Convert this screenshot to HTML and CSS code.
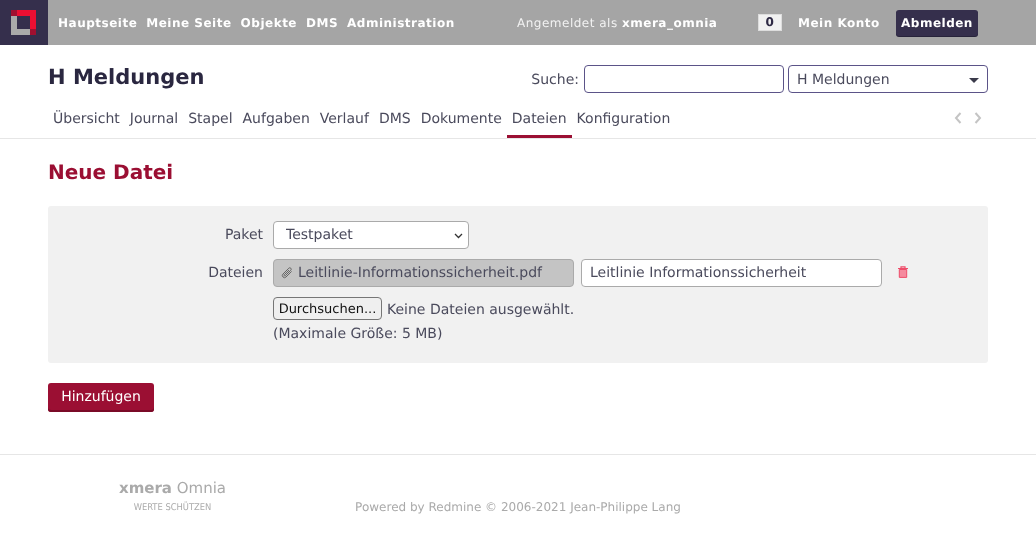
FILE: index.html
```html
<!DOCTYPE html>
<html lang="de">
<head>
<meta charset="utf-8">
<title>Neue Datei</title>
<link rel="stylesheet" href="styles.css">
</head>
<body>
<header class="top-menu">
  <a class="logo" href="#" aria-label="Startseite">
    <svg width="25" height="25" viewBox="0 0 25 25">
      <rect x="0" y="0" width="25" height="25" fill="#eb0f32"/>
      <path d="M0 6h6v13h19v6H0z" fill="#aaaaaa"/>
      <path d="M0 0h6v6H0z" fill="#a01030"/>
      <path d="M19 19h6v6h-6z" fill="#a01030"/>
      <rect x="6" y="6" width="13" height="13" fill="#352f4c"/>
    </svg>
  </a>
  <nav class="main-links">
    <a href="#">Hauptseite</a>
    <a href="#">Meine Seite</a>
    <a href="#">Objekte</a>
    <a href="#">DMS</a>
    <a href="#">Administration</a>
  </nav>
  <div class="logged-as">Angemeldet als <b>xmera_omnia</b></div>
  <span class="badge">0</span>
  <a class="account" href="#">Mein Konto</a>
  <a class="logout" href="#">Abmelden</a>
</header>

<div class="project-header">
  <h1 class="project-title">H Meldungen</h1>
  <form class="quick-search">
    <label class="search-label" for="q">Suche:</label>
    <input class="search-input" id="q" type="text">
    <div class="jump-box">H Meldungen<span class="jump-caret"></span></div>
  </form>
</div>

<nav class="tabs">
  <a href="#">Übersicht</a>
  <a href="#">Journal</a>
  <a href="#">Stapel</a>
  <a href="#">Aufgaben</a>
  <a href="#">Verlauf</a>
  <a href="#">DMS</a>
  <a href="#">Dokumente</a>
  <a class="selected" href="#">Dateien</a>
  <a href="#">Konfiguration</a>
  <div class="tab-arrows">
    <svg width="8" height="14" viewBox="0 0 8 14"><path d="M6.500 2 2 7l4.500 5" fill="none" stroke="#c4c4c4" stroke-width="2"/></svg>
    <svg width="8" height="14" viewBox="0 0 8 14"><path d="M1.500 2 6 7l-4.500 5" fill="none" stroke="#c4c4c4" stroke-width="2"/></svg>
  </div>
</nav>

<main class="content">
  <h2 class="page-title">Neue Datei</h2>
  <form class="box">
    <div class="row row-package">
      <label class="row-label" for="pkg">Paket</label>
      <div class="select-wrap">
        <select class="package-select" id="pkg"><option>Testpaket</option></select>
        <svg class="chevron" width="9" height="6" viewBox="0 0 9 6"><path d="M1 1l3.500 3.500L8 1" fill="none" stroke="#333" stroke-width="1.300"/></svg>
      </div>
    </div>
    <div class="row row-files">
      <span class="row-label">Dateien</span>
      <div class="file-name">
        <svg class="clip" width="12" height="12" viewBox="0 0 12 12"><path d="M10.600 4.400 5 10a2 2 0 0 1-3-3l5.800-5.800a1.300 1.300 0 0 1 2 2L4.300 8.700a.6.6 0 0 1-1-1L8 3" fill="none" stroke="#666" stroke-width="1"/></svg>
        Leitlinie-Informationssicherheit.pdf
      </div>
      <input class="file-desc" type="text" value="Leitlinie Informationssicherheit">
      <svg class="trash" width="12" height="12" viewBox="0 0 12 12">
        <path d="M1 2.500h10M4 2.500V.8h4v1.700" fill="none" stroke="#ee4d6a" stroke-width="1.200"/>
        <path d="M2.300 3.500h7.400V11.400H2.300z" fill="#f58a9e" stroke="#ee4d6a" stroke-width="1"/>
      </svg>
    </div>
    <div class="row-indent">
      <div class="browse-line"><button class="browse" type="button">Durchsuchen...</button><span class="no-file">Keine Dateien ausgewählt.</span></div>
      <div class="max-size">(Maximale Größe: 5 MB)</div>
    </div>
  </form>
  <button class="submit" type="button">Hinzufügen</button>
</main>

<footer class="footer">
  <div class="brand">
    <div class="brand-name"><b>xmera</b> Omnia</div>
    <div class="brand-claim">WERTE SCHÜTZEN</div>
  </div>
  <div class="powered">Powered by Redmine © 2006-2021 Jean-Philippe Lang</div>
</footer>
</body>
</html>
```
FILE: styles.css
```css
* { box-sizing: border-box; }
html, body { margin: 0; padding: 0; }
body {
  width: 1036px;
  height: 535px;
  overflow: hidden;
  color: #4a4a5c;
  font-family: "DejaVu Sans", sans-serif;
  font-size: 14px;
  text-rendering: geometricPrecision;
  will-change: transform;
}
input, select, button { text-rendering: geometricPrecision; }
a { text-decoration: none; color: inherit; }

.top-menu {
  display: flex;
  align-items: center;
  height: 45px;
  background: #a5a5a5;
  color: #fff;
  font-size: 12px;
  font-weight: 700;
  letter-spacing: .5px;
}
.logo {
  display: flex;
  align-items: center;
  width: 48px;
  height: 45px;
  padding-left: 11px;
  background: #352f4c;
}
.main-links { display: flex; gap: 9px; margin-left: 10px; width: 459px; }
.logged-as { font-weight: 400; width: 241px; color: #f2f2f2; }
.logged-as b { color: #fff; font-weight: 700; }
.badge {
  width: 24px;
  height: 17px;
  margin-right: 16px;
  background: #f1f1f1;
  border: 1px solid #ddd;
  color: #2f2a45;
  text-align: center;
  line-height: 14px;
}
.account { width: 98px; }
.logout {
  height: 26px;
  line-height: 26px;
  padding: 0 5px;
  background: #352f4c;
  border-radius: 3px;
  box-shadow: 0 1px 0 #27233a;
}

.project-header {
  display: flex;
  justify-content: space-between;
  align-items: flex-start;
  padding: 20px 48px 0;
  height: 57px;
}
.project-title {
  margin: 0;
  font-size: 21px;
  line-height: 24px;
  font-weight: 700;
  color: #2a2740;
}
.quick-search { display: flex; align-items: center; }
.search-label { margin-right: 5px; padding-top: 1px; }
.search-input, .jump-box {
  width: 200px;
  height: 28px;
  border: 1px solid #5b5488;
  border-radius: 4px;
  background: #fff;
}
.jump-box {
  position: relative;
  margin-left: 4px;
  padding-left: 8px;
  line-height: 28px;
}
.jump-caret {
  position: absolute;
  right: 8px;
  top: 12px;
  border: 5px solid transparent;
  border-top-color: #3a3a4a;
  border-bottom-width: 0;
}

.tabs {
  display: flex;
  height: 37px;
  padding: 0 48px;
  border-bottom: 1px solid #e6e6e6;
  line-height: 35px;
}
.tabs > a { padding: 0 5px; height: 36px; }
.tabs > a.selected { border-bottom: 3px solid #9b0f33; }
.tab-arrows {
  display: flex;
  align-items: center;
  gap: 12px;
  margin-left: auto;
  height: 32px;
  padding-right: 6px;
}

.content { padding: 0 48px; }
.page-title {
  margin: 22px 0 22px;
  font-size: 20px;
  line-height: 23px;
  font-weight: 700;
  color: #9b0f33;
}
.box {
  height: 157px;
  padding-top: 15px;
  background: #f1f1f1;
  border-radius: 3px;
}
.row { display: flex; align-items: center; }
.row-package { height: 28px; }
.row-files { height: 28px; margin-top: 10px; }
.row-label { width: 215px; text-align: right; margin-right: 10px; }
.select-wrap { position: relative; width: 196px; height: 28px; }
.package-select {
  appearance: none;
  width: 196px;
  height: 28px;
  padding-left: 12px;
  border: 1px solid #aaa;
  border-radius: 4px;
  background: #fff;
  color: #4a4a5c;
  font: inherit;
}
.chevron { position: absolute; right: 6px; top: 12px; }
.file-name {
  display: flex;
  align-items: center;
  gap: 5px;
  width: 301px;
  height: 28px;
  padding-left: 7px;
  background: #c4c4c4;
  border: 1px solid #aaa;
  border-radius: 4px;
}
.file-desc {
  width: 301px;
  height: 28px;
  margin-left: 7px;
  padding: 0 8px;
  border: 1px solid #aaa;
  border-radius: 4px;
  background: #fff;
  color: #4a4a5c;
  font: inherit;
}
.trash { margin: -2px 0 0 15px; }
.row-indent { margin: 10px 0 0 225px; }
.browse-line { display: flex; align-items: center; height: 23px; }
.browse {
  height: 23px;
  width: 109px;
  padding: 0;
  background: #efefef;
  border: 1px solid #767676;
  border-radius: 4px;
  color: #111;
  font: inherit;
  font-size: 13px;
  line-height: 23px;
}
.no-file { margin-left: 5px; padding-top: 2px; }
.max-size { margin-top: 5px; line-height: 19px; }
.submit {
  display: block;
  margin-top: 20px;
  width: 106px;
  height: 29px;
  padding: 0 0 2px;
  background: #9b0f33;
  border: 0;
  border-radius: 3px;
  box-shadow: inset 0 -2px 0 #7a0a27;
  color: #fff;
  font: inherit;
}

.footer {
  position: relative;
  margin-top: 42px;
  height: 81px;
  border-top: 1px solid #e6e6e6;
  color: #aaa;
}
.brand {
  position: absolute;
  left: 118px;
  top: 23px;
  width: 109px;
  text-align: center;
  white-space: nowrap;
}
.brand-name { font-size: 15px; line-height: 20px; }
.brand-claim { margin-top: 4px; font-size: 9.300px; line-height: 12px; font-family: "DejaVu Sans Condensed", "DejaVu Sans", sans-serif; }
.powered {
  padding-top: 44px;
  text-align: center;
  font-size: 12px;
  line-height: 16px;
}
```
